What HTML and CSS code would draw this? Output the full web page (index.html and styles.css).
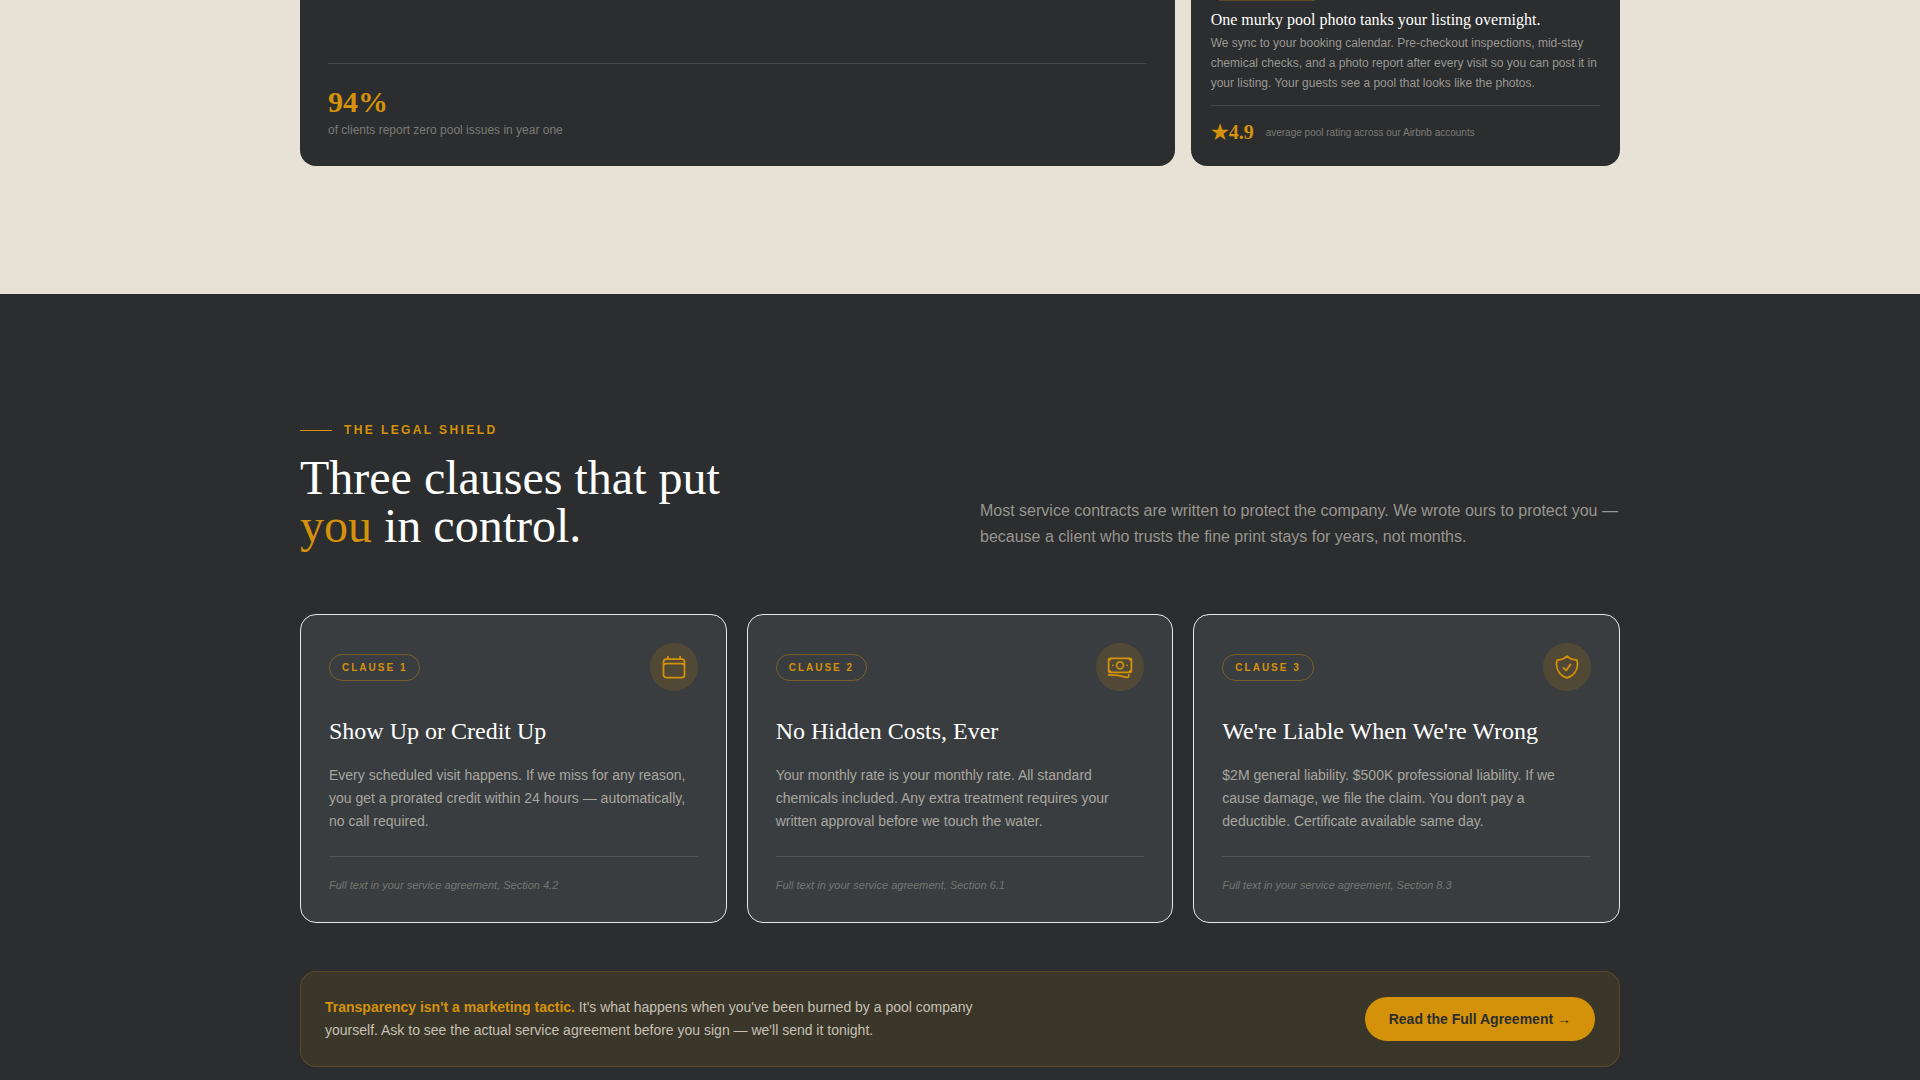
FILE: index.html
```html
<!DOCTYPE html>
<html lang="en">
<head>
  <meta charset="utf-8">
  <meta name="viewport" content="width=device-width, initial-scale=1">
  <title>The Legal Shield</title>
  <link rel="stylesheet" href="styles.css">
</head>
<body>
  <section class="clients">
    <div class="container bento">
      <article class="bento-card bento-card--wide">
        <div class="bento-stat">
          <p class="bento-number">94%</p>
          <p class="bento-caption">of clients report zero pool issues in year one</p>
        </div>
      </article>
      <article class="bento-card bento-card--small">
        <div class="tag-edge"></div>
        <h3 class="bento-title">One murky pool photo tanks your listing overnight.</h3>
        <p class="bento-text">We sync to your booking calendar. Pre-checkout inspections, mid-stay chemical checks, and a photo report after every visit so you can post it in your listing. Your guests see a pool that looks like the photos.</p>
        <div class="rating">
          <span class="rating-number">★4.9</span>
          <span class="rating-caption">average pool rating across our Airbnb accounts</span>
        </div>
      </article>
    </div>
  </section>

  <section class="legal">
    <div class="container">
      <header class="legal-head">
        <div>
          <p class="eyebrow">THE LEGAL SHIELD</p>
          <h2 class="legal-title">Three clauses that put<br><span class="accent">you</span> in control.</h2>
        </div>
        <p class="legal-intro">Most service contracts are written to protect the company. We wrote ours to protect you — because a client who trusts the fine print stays for years, not months.</p>
      </header>

      <div class="clauses">
        <article class="clause">
          <div class="clause-top">
            <span class="clause-tag">CLAUSE 1</span>
            <span class="clause-icon">
              <svg viewBox="0 0 24 24" aria-hidden="true"><path d="M6.75 3v2.25M17.25 3v2.25M3 18.75V7.5a2.25 2.25 0 0 1 2.25-2.25h13.5A2.25 2.25 0 0 1 21 7.5v11.25m-18 0A2.25 2.25 0 0 0 5.25 21h13.5A2.25 2.25 0 0 0 21 18.75m-18 0v-7.5A2.25 2.25 0 0 1 5.25 9h13.5A2.25 2.25 0 0 1 21 11.25v7.5"/></svg>
            </span>
          </div>
          <h3 class="clause-title">Show Up or Credit Up</h3>
          <p class="clause-text">Every scheduled visit happens. If we miss for any reason, you get a prorated credit within 24 hours — automatically, no call required.</p>
          <p class="clause-note">Full text in your service agreement, Section 4.2</p>
        </article>

        <article class="clause">
          <div class="clause-top">
            <span class="clause-tag">CLAUSE 2</span>
            <span class="clause-icon">
              <svg viewBox="0 0 24 24" aria-hidden="true"><path d="M2.25 18.75a60.07 60.07 0 0 1 15.797 2.101c.727.198 1.453-.342 1.453-1.096V18.75M3.75 4.5v.75A.75.75 0 0 1 3 6h-.75m0 0v-.375c0-.621.504-1.125 1.125-1.125H20.25M2.25 6v9m18-10.5v.75c0 .414.336.75.75.75h.75m-1.5-1.5h.375c.621 0 1.125.504 1.125 1.125v9.75c0 .621-.504 1.125-1.125 1.125h-.375m1.5-1.5H21a.75.75 0 0 0-.75.75v.75m0 0H3.75m0 0h-.375a1.125 1.125 0 0 1-1.125-1.125V15m1.5 1.5v-.75A.75.75 0 0 0 3 15h-.75M15 10.5a3 3 0 1 1-6 0 3 3 0 0 1 6 0Zm3 0h.008v.008H18V10.5Zm-12 0h.008v.008H6V10.5Z"/></svg>
            </span>
          </div>
          <h3 class="clause-title">No Hidden Costs, Ever</h3>
          <p class="clause-text">Your monthly rate is your monthly rate. All standard chemicals included. Any extra treatment requires your written approval before we touch the water.</p>
          <p class="clause-note">Full text in your service agreement, Section 6.1</p>
        </article>

        <article class="clause">
          <div class="clause-top">
            <span class="clause-tag">CLAUSE 3</span>
            <span class="clause-icon">
              <svg viewBox="0 0 24 24" aria-hidden="true"><path d="M9 12.75 11.25 15 15 9.75m-3-7.036A11.959 11.959 0 0 1 3.598 6 11.99 11.99 0 0 0 3 9.749c0 5.592 3.824 10.29 9 11.623 5.176-1.332 9-6.03 9-11.622 0-1.31-.21-2.571-.598-3.751h-.152c-3.196 0-6.1-1.248-8.25-3.285Z"/></svg>
            </span>
          </div>
          <h3 class="clause-title">We're Liable When We're Wrong</h3>
          <p class="clause-text">$2M general liability. $500K professional liability. If we cause damage, we file the claim. You don't pay a deductible. Certificate available same day.</p>
          <p class="clause-note">Full text in your service agreement, Section 8.3</p>
        </article>
      </div>

      <div class="banner">
        <p class="banner-text"><strong>Transparency isn't a marketing tactic.</strong> It's what happens when you've been burned by a pool company yourself. Ask to see the actual service agreement before you sign — we'll send it tonight.</p>
        <a class="banner-button" href="#agreement">Read the Full Agreement →</a>
      </div>
    </div>
  </section>
</body>
</html>
```

FILE: styles.css
```css
:root {
  --charcoal: #2b2d2e;
  --slate: #3a3d3f;
  --sand: #e8e1d5;
  --amber: #d4920a;
  --serif: "Liberation Serif", "Times New Roman", serif;
  --sans: "Liberation Sans", Arial, sans-serif;
}

* {
  box-sizing: border-box;
  margin: 0;
}

body {
  display: flex;
  flex-direction: column;
  min-height: 100vh;
  background: var(--charcoal);
  color: #fff;
  font-family: var(--sans);
}

.container {
  width: 100%;
  max-width: 1400px;
  margin: 0 auto;
  padding: 0 40px;
}

/* Client types */

.clients {
  padding-bottom: 128px;
  background: var(--sand);
}

.bento {
  display: grid;
  grid-template-columns: repeat(3, minmax(0, 1fr));
  gap: 16px;
}

.bento-card {
  display: flex;
  flex-direction: column;
  background: var(--charcoal);
  border-radius: 0 0 16px 16px;
}

.bento-card--wide {
  grid-column: span 2;
  justify-content: flex-end;
  padding: 28px;
}

.bento-card--small {
  padding: 0 20px 20px;
}

.bento-stat {
  padding-top: 20px;
  border-top: 1px solid rgba(255, 255, 255, 0.12);
}

.bento-number {
  margin-bottom: 2px;
  color: var(--amber);
  font: 700 30px/36px var(--serif);
}

.bento-caption {
  color: #7c7b77;
  font-size: 12px;
  line-height: 16px;
}

.tag-edge {
  width: 96px;
  height: 1px;
  margin: 0 0 8px 8px;
  background: rgba(212, 146, 10, 0.3);
}

.bento-title {
  font: 400 16px/22px var(--serif);
}

.bento-text {
  margin: 2px 0 12px;
  color: #9a9893;
  font-size: 12px;
  line-height: 20px;
}

.rating {
  display: flex;
  align-items: center;
  gap: 12px;
  padding-top: 12px;
  border-top: 1px solid rgba(255, 255, 255, 0.12);
}

.rating-number {
  color: var(--amber);
  font: 700 20px/28px var(--serif);
}

.rating-caption {
  color: #7c7b77;
  font-size: 10px;
}

/* Legal shield */

.legal {
  flex: 1;
  padding: 128px 0 12px;
}

.legal-head {
  display: grid;
  grid-template-columns: repeat(2, minmax(0, 1fr));
  gap: 40px;
  align-items: end;
  margin-bottom: 64px;
}

.eyebrow {
  display: flex;
  align-items: center;
  gap: 12px;
  margin-bottom: 16px;
  color: var(--amber);
  font-size: 12px;
  font-weight: 700;
  line-height: 16px;
  letter-spacing: 0.2em;
}

.eyebrow::before {
  content: "";
  width: 32px;
  height: 1px;
  background: var(--amber);
}

.legal-title {
  font: 400 48px/48px var(--serif);
}

.accent {
  color: var(--amber);
}

.legal-intro {
  color: #989690;
  font-size: 16px;
  line-height: 26px;
}

.clauses {
  display: grid;
  grid-template-columns: repeat(3, minmax(0, 1fr));
  gap: 20px;
  margin-bottom: 48px;
}

.clause {
  padding: 28px;
  background: var(--slate);
  border: 1px solid #e5e7eb;
  border-radius: 16px;
}

.clause-top {
  display: flex;
  align-items: center;
  justify-content: space-between;
  margin-bottom: 24px;
}

.clause-tag {
  padding: 5px 12px;
  border: 1px solid rgba(212, 146, 10, 0.4);
  border-radius: 999px;
  color: var(--amber);
  font-size: 10px;
  font-weight: 700;
  line-height: 15px;
  letter-spacing: 0.2em;
}

.clause-icon {
  display: grid;
  place-items: center;
  width: 48px;
  height: 48px;
  border-radius: 50%;
  background: rgba(212, 146, 10, 0.15);
}

.clause-icon svg {
  width: 28px;
  height: 28px;
  fill: none;
  stroke: var(--amber);
  stroke-width: 1.5;
  stroke-linecap: round;
  stroke-linejoin: round;
}

.clause-title {
  margin-bottom: 17px;
  font: 400 24px/32px var(--serif);
}

.clause-text {
  margin-bottom: 23px;
  color: #a8a69f;
  font-size: 14px;
  line-height: 23px;
}

.clause-note {
  padding-top: 20px;
  border-top: 1px solid rgba(255, 255, 255, 0.12);
  color: #74756f;
  font-size: 11px;
  font-style: italic;
  line-height: 17px;
}

.banner {
  display: flex;
  align-items: center;
  justify-content: space-between;
  gap: 24px;
  padding: 24px;
  background: #3b362a;
  border: 1px solid rgba(212, 146, 10, 0.2);
  border-radius: 16px;
}

.banner-text {
  max-width: 672px;
  color: #c6c0b3;
  font-size: 14px;
  line-height: 23px;
}

.banner-text strong {
  color: var(--amber);
}

.banner-button {
  flex: none;
  padding: 12px 24px;
  background: var(--amber);
  border-radius: 999px;
  color: var(--charcoal);
  font-size: 14px;
  font-weight: 700;
  line-height: 20px;
  text-decoration: none;
}
```
